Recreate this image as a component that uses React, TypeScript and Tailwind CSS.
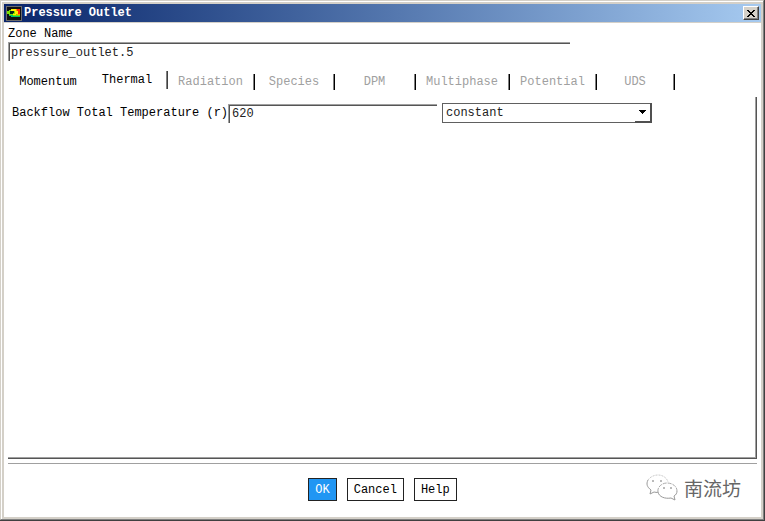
import { useState } from "react";

const tabs = [
  { name: "Momentum", width: "w-20", enabled: true },
  { name: "Thermal", width: "w-20", enabled: true },
  { name: "Radiation", width: "w-[87px]", enabled: false },
  { name: "Species", width: "w-20", enabled: false },
  { name: "DPM", width: "w-[81px]", enabled: false },
  { name: "Multiphase", width: "w-[94px]", enabled: false },
  { name: "Potential", width: "w-[87px]", enabled: false },
  { name: "UDS", width: "w-[78px]", enabled: false },
];

function AppIcon() {
  return (
    <svg width="16" height="15" viewBox="0 0 16 15" shapeRendering="crispEdges" aria-hidden="true">
      <rect width="16" height="15" fill="#6b6b6b" />
      <rect x="1" y="1" width="14" height="13" fill="#111" />
      <path d="M1 5h2V4h2V3h9v7H7V9H3V8H1z" fill="#7be000" />
      <path d="M5 3h6v1h1v4h-2v1H7V8h2V5H5z" fill="#fff000" />
      <path d="M11 3h3v5h-2V5h-1z" fill="#ff2a00" />
      <path d="M10 3h1v2h-1zM11 8h3v1h-3z" fill="#ff9a00" />
      <path d="M4 5h4v2H7v1H4z" fill="#06251c" />
      <path d="M3 9h4v1h7v1H5v-1H3z" fill="#00c46a" />
    </svg>
  );
}

function ChatLogo() {
  return (
    <svg width="32" height="28" viewBox="0 0 32 28" fill="none" stroke="#999" strokeWidth="1" aria-hidden="true">
      <path d="M2 6C4 3 8 1 12 1c5 0 9 3 10 7" stroke="#ccc" strokeDasharray="2 1" />
      <path d="M2 6c-2 4-1 7 3 10l-1 4 4-2c1 0 3 1 4 0" />
      <path d="M12 18c-1-5 4-9 9-9s10 3 10 8" stroke="#aaa" strokeDasharray="4 1" />
      <path d="M12 18c1 5 7 7 13 6l4 2-1-4c2-1 3-3 3-5" />
      <path d="M6 7h2M14 7h2M17 14h2M24 14h2" stroke="#777" />
    </svg>
  );
}

export default function App() {
  const [active, setActive] = useState("Thermal");
  const [zone, setZone] = useState("pressure_outlet.5");
  const [temperature, setTemperature] = useState("620");

  return (
    <div className="min-h-screen flex border-r border-b border-[#404040] bg-[#d4d0c8] font-['Liberation_Mono',monospace] text-xs leading-4 text-black">
      <div className="flex-1 flex border border-t-[#d4d0c8] border-l-[#d4d0c8] border-r-[#808080] border-b-[#808080]">
        <div className="flex-1 flex flex-col border-t border-l border-white p-0.5">
          <header className="h-[18px] flex items-center justify-between bg-linear-to-r from-[#0a246a] to-[#a6caf0] px-0.5">
            <h1 className="flex items-center gap-0.5 font-bold text-white">
              <AppIcon />
              Pressure Outlet
            </h1>
            <button
              aria-label="Close"
              className="w-4 h-3.5 flex items-center justify-center bg-[#d4d0c8] border border-t-white border-l-white border-r-[#404040] border-b-[#404040] shadow-[inset_-1px_-1px_0_#808080]"
            >
              <svg width="8" height="7" viewBox="0 0 8 7" shapeRendering="crispEdges" aria-hidden="true">
                <path d="M0 0h2v1h1v1h2V1h1V0h2v1H7v1H6v1H5v1h1v1h1v1h1v1H6V6H5V5H3v1H2v1H0V6h1V5h1V4h1V3H2V2H1V1H0z" fill="#000" />
              </svg>
            </button>
          </header>

          <main className="flex-1 flex flex-col mt-px bg-white px-1 pt-[3px]">
            <label htmlFor="zone" className="self-start">Zone Name</label>
            <input
              id="zone"
              value={zone}
              onChange={(e) => setZone(e.target.value)}
              className="w-3/4 h-[19px] pt-0.5 pl-0.5 border-t border-l border-[#a0a0a0] shadow-[inset_1px_1px_0_#555] outline-none text-[#222]"
            />

            <div role="tablist" className="flex mt-2.5">
              {tabs.map((tab) => (
                <button
                  key={tab.name}
                  role="tab"
                  aria-selected={active === tab.name}
                  disabled={!tab.enabled}
                  onClick={() => setActive(tab.name)}
                  className={`${tab.width} h-5 shrink-0 flex items-center ${
                    active === tab.name ? "pb-0.5" : "pt-0.5"
                  } ${tab.enabled ? "" : "text-[#a0a0a0]"}`}
                >
                  <span className="flex-1 text-center">{tab.name}</span>
                  {tab.name !== "Momentum" && (
                    <span className={`w-0.5 border-l border-[#808080] ${tab.enabled ? "h-[18px] bg-[#404040]" : "h-4 bg-black"}`} />
                  )}
                </button>
              ))}
            </div>

            <section className="flex-1 mt-1.5 border-r border-b border-[#555] shadow-[inset_-1px_-1px_0_#a0a0a0] pt-1.5 pl-1">
              <div className="flex items-center">
                <label htmlFor="temperature" className="w-[216px] whitespace-nowrap">Backflow Total Temperature (r)</label>
                <input
                  id="temperature"
                  value={temperature}
                  onChange={(e) => setTemperature(e.target.value)}
                  className="w-[209px] h-[19px] pl-[3px] border-t border-l border-[#a0a0a0] shadow-[inset_1px_1px_0_#555] outline-none text-[#222]"
                />
                <div className="relative ml-[5px] w-[210px]">
                  <select
                    aria-label="Temperature profile"
                    className="block w-full h-5 appearance-none bg-white pl-[3px] border border-[#606060] outline-none text-[#222]"
                  >
                    <option>constant</option>
                  </select>
                  <span className="pointer-events-none absolute right-0 top-0 w-[17px] h-5 flex items-center justify-center border-r-2 border-b-2 border-[#505050]">
                    <svg width="7" height="4" viewBox="0 0 7 4" shapeRendering="crispEdges" aria-hidden="true">
                      <path d="M0 0h7v1H6v1H5v1H4v1H3V3H2V2H1V1H0z" fill="#000" />
                    </svg>
                  </span>
                </div>
              </div>
            </section>

            <footer className="relative mt-1 h-[54px] border-t border-[#a0a0a0] flex justify-center gap-2.5 pt-3.5">
              <button className="h-[23px] px-1.5 border border-[#222] bg-[#2196f3] text-white">OK</button>
              <button className="h-[23px] px-1.5 border border-[#222] bg-white">Cancel</button>
              <button className="h-[23px] px-1.5 border border-[#222] bg-white">Help</button>
              <div className="absolute right-4 top-2.5 flex items-center gap-1.5 font-['Noto_Sans_CJK_SC',sans-serif] text-[19px] leading-7 text-[#666]">
                <ChatLogo />
                <span>南流坊</span>
              </div>
            </footer>
          </main>
        </div>
      </div>
    </div>
  );
}
